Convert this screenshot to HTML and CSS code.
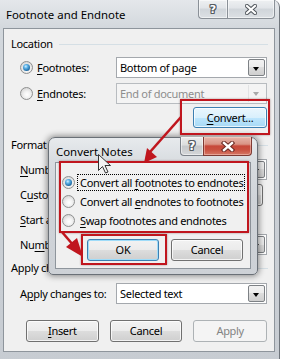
FILE: index.html
```html
<!DOCTYPE html>
<html>
<head>
<meta charset="utf-8">
<title>Footnote and Endnote</title>
<link rel="stylesheet" href="styles.css">
</head>
<body>
<div class="win">
  <div class="titlebar">
    <span class="title">Footnote and Endnote</span>
    <div class="caps">
      <div class="cap help"><span class="qmark">?</span></div>
      <div class="cap close">
        <svg width="12" height="11" viewBox="0 0 12 11"><path d="M2 2 L10 9 M10 2 L2 9" stroke="#50565c" stroke-width="4.2" stroke-linecap="square"/><path d="M2 2 L10 9 M10 2 L2 9" stroke="#fff" stroke-width="2.2" stroke-linecap="square"/></svg>
      </div>
    </div>
  </div>
  <div class="client">
    <div class="ghead"><span>Location</span><i class="rule"></i></div>
    <div class="row r1">
      <label class="radio"><span class="rb on"></span><span><u>F</u>ootnotes:</span></label>
      <div class="select"><span class="val">Bottom of page</span><b class="dd"></b></div>
    </div>
    <div class="row r2">
      <label class="radio"><span class="rb"></span><span><u>E</u>ndnotes:</span></label>
      <div class="select disabled"><span class="val">End of document</span><b class="dd"></b></div>
    </div>
    <div class="row r3 right">
      <div class="btn hot convert"><u>C</u>onvert...</div>
    </div>
    <div class="ghead g2"><span>Format</span><i class="rule"></i></div>
    <div class="row r4">
      <span class="lbl"><u>N</u>umber format:</span>
      <div class="select"><span class="val"></span><b class="dd"></b></div>
    </div>
    <div class="row r5">
      <span class="lbl">C<u>u</u>stom mark:</span>
      <div class="tbox"></div>
      <div class="btn sym"></div>
    </div>
    <div class="row r5">
      <span class="lbl"><u>S</u>tart at:</span>
      <div class="tbox spin"></div>
    </div>
    <div class="row r5">
      <span class="lbl">Nu<u>m</u>bering:</span>
      <div class="select"><span class="val"></span><b class="dd"></b></div>
    </div>
    <div class="ghead g3"><span>Apply changes</span><i class="rule"></i></div>
    <div class="row r6">
      <span class="lbl">A<u>p</u>ply changes to:</span>
      <div class="select"><span class="val">Selected text</span><b class="dd"></b></div>
    </div>
    <div class="btnrow">
      <div class="btn"><u>I</u>nsert</div>
      <div class="btn">Cancel</div>
      <div class="btn disabled">Apply</div>
    </div>
  </div>
</div>

<div class="dlg">
  <div class="dtitle">
    <span class="title">Convert Notes</span>
    <div class="dcaps">
      <div class="dcap dhelp"><span class="qmark big">?</span></div>
      <div class="dcap dclose">
        <svg width="14" height="11" viewBox="0 0 14 11"><path d="M3 2 L11 9 M11 2 L3 9" stroke="#6a2a24" stroke-width="4.4" stroke-linecap="square"/><path d="M3 2 L11 9 M11 2 L3 9" stroke="#fff" stroke-width="2.4" stroke-linecap="square"/></svg>
      </div>
    </div>
  </div>
  <div class="dclient">
    <div class="opt"><span class="rb on"></span><span class="otext focus">Convert all <u>f</u>ootnotes to endnotes</span></div>
    <div class="opt"><span class="rb"></span><span class="otext">Convert all <u>e</u>ndnotes to footnotes</span></div>
    <div class="opt"><span class="rb"></span><span class="otext"><u>S</u>wap footnotes and endnotes</span></div>
    <div class="dbtns">
      <div class="btn def">OK</div>
      <div class="btn">Cancel</div>
    </div>
  </div>
</div>

<div class="mark m1"></div>
<div class="mark m2"></div>
<div class="mark m3"></div>

<svg class="overlay" width="281" height="359" viewBox="0 0 281 359">
  <line x1="181" y1="117" x2="150" y2="152" stroke="#c0161e" stroke-width="2.6"/>
  <polygon points="144,163 147,148 157,157" fill="#c0161e"/>
  <line x1="62" y1="232" x2="74" y2="246" stroke="#c0161e" stroke-width="2.6"/>
  <polygon points="83,257 66,247 77,238" fill="#c0161e"/>
  <polygon points="98.5,154.5 98.5,170.5 102.5,166.5 105.5,173 108,172 105,165.5 110.5,165.5" fill="#f2f2f2" stroke="#333" stroke-width="1" stroke-linejoin="round"/>
</svg>
</body>
</html>
```

FILE: styles.css
```css
* { box-sizing: border-box; }
html, body { margin: 0; padding: 0; }
body {
  width: 281px; height: 359px; overflow: hidden; position: relative;
  background: #fff;
  font-family: "Noto Sans", "Open Sans", sans-serif;
  font-size: 11px; letter-spacing: -0.3px; color: #000; line-height: 16px;
}
u { text-decoration: underline; text-underline-offset: 2px; text-decoration-thickness: 1px; }

.win {
  width: 280px; height: 366px;
  background: linear-gradient(180deg, #e4e7eb 0px, #d3d8dd 28px, #cdd2d8 120px, #c7ccd2 366px);
  border-right: 1px solid #6f757c;
  border-top-right-radius: 7px;
}
.titlebar { height: 28px; display: flex; align-items: flex-start; padding: 0 4px 0 6px; }
.title { margin-top: 7px; white-space: nowrap; font-size: 11.4px; letter-spacing: 0; }
.caps { margin-left: auto; display: flex; height: 19px; }
.cap {
  height: 19px; display: flex; align-items: center; justify-content: center;
  border: 1px solid #8a9097; border-top: none;
  background: linear-gradient(180deg, #eef0f2 0%, #e1e4e8 45%, #d0d5da 50%, #dce0e4 100%);
  box-shadow: inset 0 0 0 1px rgba(255,255,255,.55);
}
.cap.help { width: 29px; border-radius: 0 0 0 4px; border-right: none; }
.cap.close { width: 48px; border-radius: 0 0 4px 0; }
.qmark {
  font-family: "DejaVu Sans", sans-serif; font-weight: bold; font-size: 11px; line-height: 11px; letter-spacing: 0;
  color: #fff;
  text-shadow: 1px 0 0 #555b61, -1px 0 0 #555b61, 0 1px 0 #555b61, 0 -1px 0 #555b61, 1px 1px 0 #555b61, -1px -1px 0 #555b61, 1px -1px 0 #555b61, -1px 1px 0 #555b61;
}
.qmark.big { font-size: 12px; }

.client {
  margin-left: 3px; width: 272px; height: 324px;
  border: 1px solid #8e959c; background: #f0f0f0;
  padding: 7px 7px 0 7px;
}
.ghead { display: flex; align-items: center; height: 16px; white-space: nowrap; }
.ghead .rule { flex: 1; height: 1px; background: #d5dfe5; margin: 0 -1px 0 6px; }
.g2 { margin-top: 9px; }
.g3 { margin-top: 5px; }

.row { display: flex; align-items: center; height: 21px; padding-left: 9px; margin-top: 4px; white-space: nowrap; }
.r1 { margin-top: 5px; }
.r2 { margin-top: 5px; }
.r3 { margin-top: 3px; justify-content: flex-end; }
.r4 { margin-top: 6px; }
.r6 { margin-top: 7px; }
.radio, .lbl { width: 96px; flex: none; display: flex; align-items: center; }
.radio .rb { margin-right: 4px; }

.rb {
  width: 13px; height: 13px; border-radius: 50%; flex: none; position: relative;
  border: 1px solid #8e8f8f;
  background: radial-gradient(circle at 55% 60%, #ffffff 0%, #f2f2f2 35%, #d8d8d8 75%, #c4c4c4 100%);
}
.rb.on::after {
  content: ""; position: absolute; left: 2px; top: 2px; width: 7px; height: 7px; border-radius: 50%;
  background: radial-gradient(circle at 40% 35%, #d4f0ff 0%, #5cb2e8 30%, #1f6aa3 70%, #143f66 100%);
}

.select {
  width: 151px; height: 21px; display: flex; align-items: stretch;
  background: #fff; border: 1px solid #a4a8ad; padding: 1px;
}
.select .val { flex: 1; padding-left: 2px; line-height: 17px; }
.dd {
  width: 17px; flex: none; position: relative;
  border: 1px solid #7d8185; border-radius: 2px;
  background: linear-gradient(180deg, #f2f2f2 0%, #ebebeb 50%, #dddddd 50%, #cfcfcf 100%);
}
.dd::after {
  content: ""; position: absolute; left: 4px; top: 7px;
  border-style: solid; border-width: 4px 3.5px 0 3.5px; border-color: #000 transparent transparent transparent;
}
.select.disabled { background: #f4f4f4; border-color: #b8bcc0; color: #8d8d8d; }
.select.disabled .dd { background: none; border: none; border-left: 1px solid #e2e3e4; border-radius: 0; }
.select.disabled .dd::after { border-top-color: #a9a9a9; }

.tbox { width: 70px; height: 21px; background: #fff; border: 1px solid #a4a8ad; }
.tbox.spin { width: 74px; }

.btn {
  width: 73px; height: 22px; display: flex; align-items: center; justify-content: center;
  border: 1px solid #707070; border-radius: 3px;
  background: linear-gradient(180deg, #f2f2f2 0%, #ebebeb 50%, #dddddd 50%, #cfcfcf 100%);
  box-shadow: inset 0 0 0 1px rgba(255,255,255,.75);
  white-space: nowrap;
}
.btn.hot {
  border-color: #3c7fb1;
  background: linear-gradient(180deg, #eaf6fd 0%, #d9f0fc 50%, #bee6fd 50%, #a7d9f5 100%);
}
.convert { width: 74px; height: 21px; }
.sym { width: 74px; margin-left: 3px; }
.btn.disabled { border-color: #adb2b5; background: #f4f4f4; color: #838383; box-shadow: none; }
.btnrow { display: flex; gap: 11px; padding-left: 15px; margin-top: 16px; }
.btnrow .btn.disabled { width: 74px; }

/* Convert Notes dialog */
.dlg {
  position: absolute; left: 48px; top: 137px; width: 210px; height: 138px;
  border: 1px solid #6a7077; border-radius: 7px 7px 5px 5px;
  background: linear-gradient(180deg, #e7eaed 0px, #d8dce0 24px, #d0d4d9 60px, #cdd1d6 138px);
  box-shadow: 0 0 6px 1px rgba(0,0,0,.45);
}
.dtitle { height: 24px; display: flex; align-items: flex-start; padding: 0 5px 0 7px; }
.dtitle .title { margin-top: 6px; }
.dcaps { margin-left: auto; margin-top: -1px; display: flex; height: 19px; }
.dcap { height: 19px; display: flex; align-items: center; justify-content: center; border: 1px solid #7c8188; border-top: none; }
.dhelp {
  width: 23px; border-right: none; border-radius: 0 0 0 4px;
  background: linear-gradient(180deg, #eceded 0%, #dcdddd 45%, #c6c8ca 50%, #d4d6d8 100%);
  box-shadow: inset 0 0 0 1px rgba(255,255,255,.5);
}
.dclose {
  width: 49px; border-radius: 0 0 4px 0; border-color: #7e3a33;
  background: linear-gradient(180deg, #e7b6ac 0%, #d99384 40%, #c7483a 50%, #c9503f 70%, #d57866 100%);
  box-shadow: inset 0 0 0 1px rgba(255,220,210,.45);
}
.dclient {
  margin: 0 6px; width: 196px; height: 107px;
  border: 1px solid #8e959c; background: #f0f0f0;
  padding: 10px 0 0 6px;
}
.opt { display: flex; align-items: center; height: 19px; white-space: nowrap; }
.otext { margin-left: 2px; padding: 0 1px 0 2px; line-height: 15px; border: 1px solid transparent; }
.otext.focus { border: 1px dotted #000; }
.dbtns { display: flex; gap: 12px; padding-left: 25px; margin-top: 9px; }
.dbtns .btn { width: 72px; }
.btn.def { border-color: #3c7fb1; box-shadow: inset 0 0 0 1px #9fdcf9; }

/* highlight marks */
.mark { position: absolute; border: 2px solid #c0161e; box-shadow: 0 0 2px rgba(60,0,0,.4); }
.m1 { left: 180px; top: 99px; width: 90px; height: 36px; }
.m2 { left: 59px; top: 161px; width: 190px; height: 72px; }
.m3 { left: 81px; top: 234px; width: 86px; height: 31px; }
.overlay { position: absolute; left: 0; top: 0; pointer-events: none; }
```
